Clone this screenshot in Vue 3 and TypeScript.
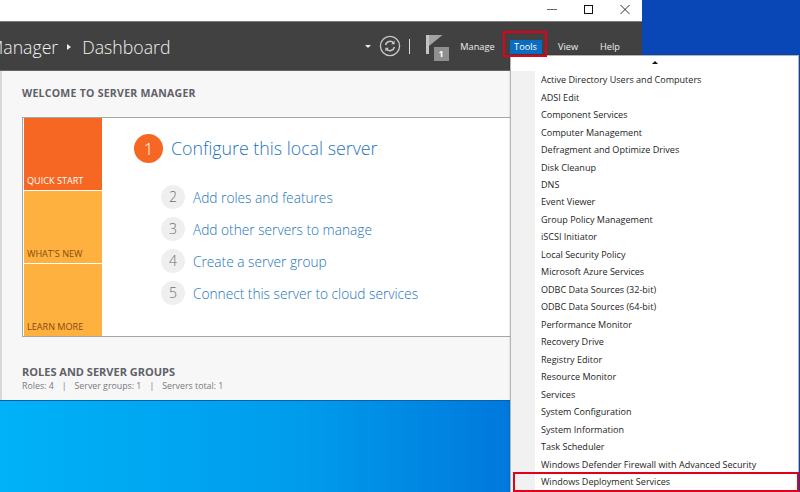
<script setup lang="ts">
const tools: string[] = [
  'Active Directory Users and Computers','ADSI Edit','Component Services','Computer Management',
  'Defragment and Optimize Drives','Disk Cleanup','DNS','Event Viewer','Group Policy Management',
  'iSCSI Initiator','Local Security Policy','Microsoft Azure Services','ODBC Data Sources (32-bit)',
  'ODBC Data Sources (64-bit)','Performance Monitor','Recovery Drive','Registry Editor','Resource Monitor',
  'Services','System Configuration','System Information','Task Scheduler',
  'Windows Defender Firewall with Advanced Security','Windows Deployment Services'
]
const tiles = [
  { label: 'QUICK START', cls: 'tile-active' },
  { label: "WHAT'S NEW", cls: 'tile-plain' },
  { label: 'LEARN MORE', cls: 'tile-plain' }
]
const steps = [
  { n: 2, text: 'Add roles and features' },
  { n: 3, text: 'Add other servers to manage' },
  { n: 4, text: 'Create a server group' },
  { n: 5, text: 'Connect this server to cloud services' }
]
</script>

<template>
  <div class="desktop">
    <div class="window">
      <div class="titlebar">
        <svg class="caption" width="12" height="12" viewBox="0 0 12 12"><path d="M1 6.5h10" stroke="#666" fill="none"/></svg>
        <svg class="caption" width="12" height="12" viewBox="0 0 12 12"><rect x="2.5" y="2.5" width="8" height="8" stroke="#111" fill="none"/></svg>
        <svg class="caption" width="12" height="12" viewBox="0 0 12 12"><path d="M1.5 2l9 9M10.5 2l-9 9" stroke="#333" fill="none"/></svg>
      </div>
      <header class="header">
        <div class="crumbs">
          <span>Manager</span>
          <span class="crumb-arrow"></span>
          <span>Dashboard</span>
        </div>
        <div class="actions">
          <span class="drop"></span>
          <svg class="refresh" width="22" height="22" viewBox="0 0 22 22">
            <circle cx="11" cy="11" r="9.6" fill="none" stroke="#c9c9c9" stroke-width="1.3"/>
            <path d="M6.6 10a4.6 4.6 0 0 1 8-2M15.4 12a4.6 4.6 0 0 1-8 2" fill="none" stroke="#c9c9c9" stroke-width="1.5"/>
            <path d="M15.6 5.6v3.6h-3.4zM6.4 16.4v-3.6h3.4z" fill="#c9c9c9"/>
          </svg>
          <span class="sep"></span>
          <span class="flag">
            <svg width="17" height="19" viewBox="0 0 17 19"><path d="M0 0h3v19H0z" fill="#c4c4c4"/><path d="M3 0h13.5L3 11z" fill="#a3a3a3"/></svg>
            <span class="badge">1</span>
          </span>
          <nav class="menu-bar">
            <span class="mb-item mb-manage">Manage</span>
            <span class="mb-item mb-tools">Tools</span>
            <span class="mb-item mb-view">View</span>
            <span class="mb-item mb-help">Help</span>
          </nav>
        </div>
      </header>
      <main class="content">
        <h2 class="section-title welcome">WELCOME TO SERVER MANAGER</h2>
        <section class="panel">
          <div class="tiles">
            <div v-for="t in tiles" :key="t.label" class="tile" :class="t.cls">{{ t.label }}</div>
          </div>
          <div class="steps">
            <div class="step-main">
              <span class="num-main">1</span>
              <span class="link-main">Configure this local server</span>
            </div>
            <div class="step-list">
              <div v-for="s in steps" :key="s.n" class="step">
                <span class="num">{{ s.n }}</span>
                <span class="link">{{ s.text }}</span>
              </div>
            </div>
          </div>
        </section>
        <h2 class="section-title roles">ROLES AND SERVER GROUPS</h2>
        <div class="summary">
          <span>Roles: 4</span><span class="bar">|</span><span>Server groups: 1</span><span class="bar">|</span><span>Servers total: 1</span>
        </div>
      </main>
    </div>

    <div class="dropdown">
      <div class="scroll-up"><span class="up"></span></div>
      <ul class="list">
        <li v-for="t in tools" :key="t" class="row">{{ t }}</li>
      </ul>
    </div>
    <div class="mark mark-tools"></div>
    <div class="mark mark-wds"></div>
  </div>
</template>

<style>
html, body { margin: 0; padding: 0; overflow: hidden; }
</style>

<style scoped>
.desktop {
  position: relative;
  width: 800px;
  height: 492px;
  overflow: hidden;
  font-family: "Open Sans", "Noto Sans", sans-serif;
  background: linear-gradient(90deg, #00b2f7 0, #009cec 300px, #0078dc 510px, #0078dc 642px, #0a47b6 642px);
}
.window {
  width: 642px;
  height: 401px;
  display: flex;
  flex-direction: column;
  background: #f7f7f7;
  border-bottom: 1px solid #0f62a8;
  box-sizing: border-box;
}
.titlebar {
  height: 21px;
  flex: none;
  background: #fff;
  display: flex;
  justify-content: flex-end;
  align-items: center;
  gap: 24.5px;
  padding: 0 11.5px 4px 0;
  box-sizing: border-box;
}
.caption { display: block; flex: none; }
.header {
  height: 50px;
  flex: none;
  box-sizing: border-box;
  background: #414141;
  border-top: 1px solid #7c7c7c;
  border-bottom: 1px solid #666;
  display: flex;
  justify-content: space-between;
  align-items: center;
  color: #f2f2f2;
}
.crumbs {
  display: flex;
  align-items: center;
  font-size: 17.7px;
  font-weight: 300;
  margin-left: -12px;
  padding-top: 2px;
  white-space: nowrap;
}
.crumb-arrow {
  width: 0; height: 0;
  border-left: 4px solid #eee;
  border-top: 3.5px solid transparent;
  border-bottom: 3.5px solid transparent;
  margin: 0 11px 0 9px;
}
.actions { display: flex; align-items: center; height: 100%; padding-right: 20px; }
.drop {
  width: 0; height: 0;
  border-top: 3px solid #eee;
  border-left: 3px solid transparent;
  border-right: 3px solid transparent;
  margin-right: 8px;
}
.refresh { display: block; margin-right: 8px; }
.sep { width: 1px; height: 15px; background: #ddd; margin-right: 16px; }
.flag { position: relative; width: 25px; height: 28px; margin-right: 2.5px; margin-top: 5px; display: block; }
.flag svg { display: block; }
.badge {
  position: absolute;
  left: 8px; top: 12px;
  width: 15px; height: 14px;
  background: #8f8f8f;
  color: #fff;
  font-size: 9px;
  font-weight: 700;
  line-height: 14px;
  text-align: center;
}
.menu-bar { display: flex; align-items: center; font-size: 9.2px; font-weight: 500; color: #eee; padding-top: 1px; }
.mb-item { display: block; }
.mb-manage { width: 49px; text-align: center; margin-right: 7.5px; }
.mb-tools { width: 32px; height: 14px; line-height: 14px; text-align: center; background: #0a6cc0; color: #fff; margin-right: 13.5px; }
.mb-view { width: 26px; text-align: center; margin-right: 17px; }
.mb-help { width: 24px; text-align: center; }
.content {
  flex: 1;
  border-left: 2px solid #d8d8d8;
  padding: 14px 0 0 20px;
  box-sizing: border-box;
  min-height: 0;
}
.section-title {
  margin: 0;
  font-size: 10.5px;
  line-height: 16px;
  font-weight: 700;
  color: #5f6068;
}
.welcome { letter-spacing: 0.27px; }
.panel {
  display: flex;
  margin-top: 16px;
  width: 620px;
  height: 220px;
  box-sizing: border-box;
  background: #fff;
  border: 1px solid #a6a6a6;
}
.tiles { width: 78px; flex: none; display: flex; flex-direction: column; gap: 1.5px; padding-left: 1px; }
.tile {
  height: 71.5px;
  box-sizing: border-box;
  display: flex;
  align-items: flex-end;
  padding: 0 0 3px 3px;
  font-size: 9.1px;
  line-height: 12px;
  white-space: nowrap;
}
.tile-active { background: #f56722; color: #fff; }
.tile-plain { background: #ffb13f; color: #854a12; }
.steps { padding: 15px 0 0 32px; }
.step-main { display: flex; align-items: center; gap: 8px; height: 30px; }
.num-main {
  width: 29px; height: 29px; border-radius: 50%;
  background: #f56722; color: #fff;
  font-size: 17px; line-height: 29px; text-align: center; font-weight: 300;
  flex: none;
}
.link-main { font-size: 17.8px; font-weight: 300; color: #1f74bd; white-space: nowrap; }
.step-list { margin: 22px 0 0 27px; display: flex; flex-direction: column; gap: 8px; }
.step { display: flex; align-items: center; gap: 8px; height: 24px; }
.num {
  width: 24px; height: 24px; border-radius: 50%;
  background: #efefef; color: #6e6e6e;
  font-size: 14px; line-height: 24px; text-align: center; flex: none; font-weight: 300;
}
.link { font-size: 13.7px; font-weight: 300; color: #2274bd; white-space: nowrap; }
.roles { margin-top: 27px; font-size: 11px; line-height: 16px; }
.summary { font-size: 8.8px; line-height: 13px; color: #77787f; white-space: nowrap; }
.bar { margin: 0 8px; }
.dropdown {
  position: absolute;
  left: 510px;
  top: 55px;
  width: 289px;
  height: 437px;
  box-sizing: border-box;
  background: #fff;
  border: 1px solid #b5b5b5;
  border-bottom: none;
  box-shadow: 0 0 2px rgba(0,0,0,.2);
}
.scroll-up { height: 15.2px; display: flex; align-items: center; justify-content: center; box-sizing: border-box; padding-bottom: 2px; background: #fff; }
.up {
  width: 0; height: 0;
  border-bottom: 3.5px solid #111;
  border-left: 3.5px solid transparent;
  border-right: 3.5px solid transparent;
}
.list {
  list-style: none;
  margin: 0;
  padding: 0;
  background: linear-gradient(90deg, #f1f1f1 0, #f1f1f1 24px, #fff 24px);
  height: 421px;
  overflow: hidden;
}
.row {
  height: 17.48px;
  line-height: 17.48px;
  padding-left: 30px;
  font-size: 9.05px;
  color: #1d1d1d;
  white-space: nowrap;
}
.mark { position: absolute; box-sizing: border-box; border: 2px solid #e4001b; pointer-events: none; }
.mark-tools { left: 503px; top: 31px; width: 44px; height: 26px; }
.mark-wds { left: 513px; top: 472px; width: 286px; height: 20px; }
</style>
